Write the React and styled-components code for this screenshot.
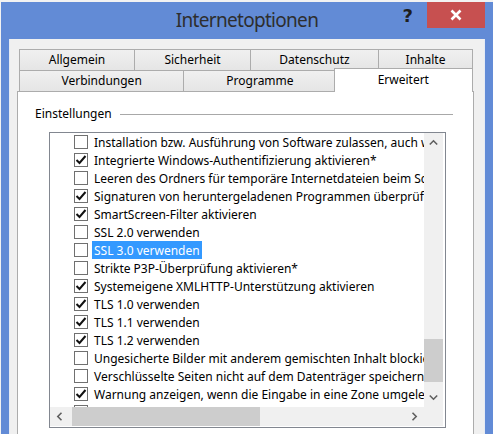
import React from 'react';
import styled, { createGlobalStyle } from 'styled-components';

const GlobalStyle = createGlobalStyle`
  html, body {
    margin: 0;
    padding: 0;
    background: #f2f2f2;
    overflow: hidden;
  }
  body {
    font-family: "Noto Sans", "Liberation Sans", sans-serif;
  }
`;

const Window = styled.div`
  margin: 2px 0 0 1px;
  width: 492px;
  height: 432px;
  background: #628bd6;
  display: flex;
  flex-direction: column;
  padding: 0 8px;
  box-sizing: border-box;
  overflow: hidden;
`;

const TitleBar = styled.div`
  height: 37px;
  flex-shrink: 0;
  display: grid;
  grid-template-columns: 1fr auto 1fr;
  align-items: start;
`;

const Title = styled.div`
  grid-column: 2;
  margin-top: 5px;
  font-size: 19px;
  color: #2e2e2e;
  letter-spacing: -0.7px;
`;

const Controls = styled.div`
  grid-column: 3;
  justify-self: end;
  display: flex;
  align-items: flex-start;
`;

const Help = styled.div`
  font-family: "DejaVu Sans", sans-serif;
  font-weight: bold;
  font-size: 18px;
  color: #1e1e1e;
  margin: 3px 14px 0 0;
`;

const Close = styled.div`
  width: 58px;
  height: 26px;
  background: #c75050;
  display: flex;
  align-items: center;
  justify-content: center;
`;

const Client = styled.div`
  flex: 1;
  background: #f0f0f0;
  border-left: 1px solid #e6ebf4;
  border-right: 1px solid #e6ebf4;
  padding: 10px 10px 0 7px;
  display: flex;
  flex-direction: column;
`;

const TabStrip = styled.div`
  padding: 0 1px 0 2px;
  display: flex;
  flex-direction: column;
`;

const TabRow = styled.div`
  display: flex;
  height: 21px;
`;

const Tab = styled.div`
  width: ${p => p.$w}px;
  height: 21px;
  box-sizing: border-box;
  margin-left: -1px;
  &:first-child { margin-left: 0; }
  border: 1px solid #acacac;
  border-bottom: none;
  background: linear-gradient(#f0f0f0, #e5e5e5);
  font-size: 12px;
  color: #000;
  display: flex;
  align-items: center;
  justify-content: center;
  padding-bottom: 1px;
`;

const ActiveTab = styled(Tab)`
  position: relative;
  z-index: 1;
  height: 24px;
  margin: -2px 0 -1px -3px;
  background: #fff;
  padding-bottom: 3px;
`;

const Panel = styled.div`
  flex: 1;
  background: #fff;
  border: 1px solid #acacac;
  border-bottom: none;
  padding: 13px 20px 0 17px;
  display: flex;
  flex-direction: column;
`;

const GroupHead = styled.div`
  display: flex;
  align-items: center;
  height: 17px;
  font-size: 12px;
  color: #000;
  gap: 8px;
`;

const GroupLine = styled.div`
  flex: 1;
  height: 1px;
  background: #a8a8a8;
  margin-top: 1px;
`;

const ListBox = styled.div`
  margin: 10px 0 0 14px;
  width: 397px;
  height: 296px;
  box-sizing: border-box;
  border: 1px solid #828790;
  background: #fff;
  padding: 0 2px 1px 0;
  display: grid;
  grid-template-columns: 1fr 19px;
  grid-template-rows: 1fr 19px;
`;

const Rows = styled.div`
  overflow: hidden;
  display: flex;
  flex-direction: column;
`;

const Row = styled.div`
  height: 18px;
  flex-shrink: 0;
  display: flex;
  align-items: center;
  padding-left: 24px;
  white-space: nowrap;
  font-size: 12px;
  color: #000;
`;

const Box = styled.div`
  width: 14px;
  height: 14px;
  box-sizing: border-box;
  border: 1px solid #707070;
  background: #fff;
  flex-shrink: 0;
  margin-right: 4px;
  display: flex;
  align-items: center;
  justify-content: center;
`;

const Label = styled.span`
  padding: 1px 2px 0;
  height: 18px;
  box-sizing: border-box;
  line-height: 17px;
  background: ${p => (p.$sel ? '#3399ff' : 'transparent')};
  color: ${p => (p.$sel ? '#fff' : '#000')};
`;

const VScroll = styled.div`
  background: #f0f0f0;
  display: flex;
  flex-direction: column;
`;

const HScroll = styled.div`
  background: #f0f0f0;
  display: flex;
`;

const Corner = styled.div`
  background: #f0f0f0;
`;

const Arrow = styled.div`
  width: 19px;
  height: 19px;
  flex-shrink: 0;
  display: flex;
  align-items: center;
  justify-content: center;
`;

const VThumb = styled.div`
  width: 19px;
  height: ${p => p.$size}px;
  margin-top: ${p => p.$offset}px;
  background: #cdcdcd;
`;

const HThumb = styled.div`
  height: 19px;
  width: ${p => p.$size}px;
  margin-left: ${p => p.$offset}px;
  background: #cdcdcd;
`;

const Spacer = styled.div`
  flex: 1;
`;

const Chevron = ({ dir }) => {
  const rot = { up: 0, down: 180, left: 270, right: 90 }[dir];
  return (
    <svg width="9" height="9" viewBox="0 0 9 9" style={{ transform: `rotate(${rot}deg)` }}>
      <path d="M0.8 6.5 L4.5 2.8 L8.2 6.5" fill="none" stroke="#606060" strokeWidth="1.6" />
    </svg>
  );
};

const Check = () => (
  <svg width="12" height="12" viewBox="0 0 12 12">
    <path d="M1.5 6 L4.5 9 L10.5 2" fill="none" stroke="#111" strokeWidth="2" />
  </svg>
);

const rowTabs = [
  { label: 'Allgemein', w: 116 },
  { label: 'Sicherheit', w: 117 },
  { label: 'Datenschutz', w: 129 },
  { label: 'Inhalte', w: 95 },
];

const items = [
  [false, 'Installation bzw. Ausführung von Software zulassen, auch wenn die Signatur ungültig ist'],
  [true, 'Integrierte Windows-Authentifizierung aktivieren*'],
  [false, 'Leeren des Ordners für temporäre Internetdateien beim Schließen des Browsers'],
  [true, 'Signaturen von heruntergeladenen Programmen überprüfen'],
  [true, 'SmartScreen-Filter aktivieren'],
  [false, 'SSL 2.0 verwenden'],
  [false, 'SSL 3.0 verwenden', true],
  [false, 'Strikte P3P-Überprüfung aktivieren*'],
  [true, 'Systemeigene XMLHTTP-Unterstützung aktivieren'],
  [true, 'TLS 1.0 verwenden'],
  [true, 'TLS 1.1 verwenden'],
  [true, 'TLS 1.2 verwenden'],
  [false, 'Ungesicherte Bilder mit anderem gemischten Inhalt blockieren'],
  [false, 'Verschlüsselte Seiten nicht auf dem Datenträger speichern'],
  [true, 'Warnung anzeigen, wenn die Eingabe in eine Zone umgeleitet wird'],
  [false, 'Warnung bei Zertifikatkonflikten'],
];

export default function App() {
  return (
    <>
      <GlobalStyle />
      <Window>
        <TitleBar>
          <Title>Internetoptionen</Title>
          <Controls>
            <Help>?</Help>
            <Close>
              <svg width="12" height="12" viewBox="0 0 12 12">
                <path d="M1.5 1.5 L10.5 10.5 M10.5 1.5 L1.5 10.5" stroke="#fff" strokeWidth="2.6" />
              </svg>
            </Close>
          </Controls>
        </TitleBar>
        <Client>
          <TabStrip>
            <TabRow>
              {rowTabs.map(t => (
                <Tab key={t.label} $w={t.w}>{t.label}</Tab>
              ))}
            </TabRow>
            <TabRow>
              <Tab $w={166}>Verbindungen</Tab>
              <Tab $w={154}>Programme</Tab>
              <ActiveTab $w={140}>Erweitert</ActiveTab>
            </TabRow>
          </TabStrip>
          <Panel>
            <GroupHead>
              <span>Einstellungen</span>
              <GroupLine />
            </GroupHead>
            <ListBox>
              <Rows>
                {items.map(([checked, text, sel]) => (
                  <Row key={text}>
                    <Box>{checked && <Check />}</Box>
                    <Label $sel={sel}>{text}</Label>
                  </Row>
                ))}
              </Rows>
              <VScroll>
                <Arrow><Chevron dir="up" /></Arrow>
                <VThumb $offset={187} $size={43} />
                <Spacer />
                <Arrow><Chevron dir="down" /></Arrow>
              </VScroll>
              <HScroll>
                <Arrow><Chevron dir="left" /></Arrow>
                <HThumb $offset={3} $size={188} />
                <Spacer />
                <Arrow><Chevron dir="right" /></Arrow>
              </HScroll>
              <Corner />
            </ListBox>
          </Panel>
        </Client>
      </Window>
    </>
  );
}
